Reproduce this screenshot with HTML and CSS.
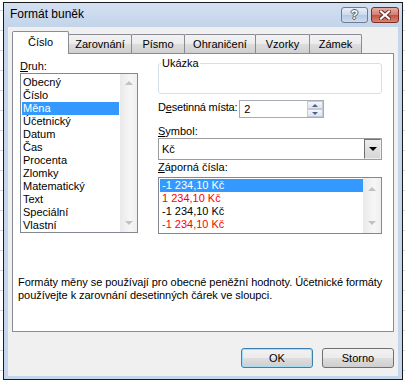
FILE: index.html
```html
<!DOCTYPE html>
<html lang="cs">
<head>
    <meta charset="UTF-8">
    <meta name="viewport" content="width=device-width, initial-scale=1.0">
    <title>Formát buněk</title>
    <link rel="stylesheet" href="styles.css">
</head>
<body>
    <div class="window">
        <div class="titlebar">
            <span class="title">Formát buněk</span>
            <div class="caption-buttons">
                <span class="cap-btn help">?</span>
                <span class="cap-btn close">
                    <svg width="12" height="10" viewBox="0 0 12 10">
                        <path d="M2 1.5 L10 8.5 M10 1.5 L2 8.5" stroke="#6b251c" stroke-width="4" stroke-linecap="square"/>
                        <path d="M2 1.5 L10 8.5 M10 1.5 L2 8.5" stroke="#fff" stroke-width="2.2" stroke-linecap="square"/>
                    </svg>
                </span>
            </div>
        </div>

        <div class="client">
            <div class="tabs">
                <div class="tab active t1">Číslo</div>
                <div class="tab t2">Zarovnání</div>
                <div class="tab t3">Písmo</div>
                <div class="tab t4">Ohraničení</div>
                <div class="tab t5">Vzorky</div>
                <div class="tab t6">Zámek</div>
            </div>

            <div class="panel">
                <div class="cols">
                    <div class="left">
                        <div class="label"><u>D</u>ruh:</div>
                        <div class="listbox">
                            <div class="items">
                                <div class="row">Obecný</div>
                                <div class="row">Číslo</div>
                                <div class="row selected">Měna</div>
                                <div class="row">Účetnický</div>
                                <div class="row">Datum</div>
                                <div class="row">Čas</div>
                                <div class="row">Procenta</div>
                                <div class="row">Zlomky</div>
                                <div class="row">Matematický</div>
                                <div class="row">Text</div>
                                <div class="row">Speciální</div>
                                <div class="row">Vlastní</div>
                            </div>
                            <div class="scrollbar">
                                <span class="arrow up"></span>
                                <span class="arrow down"></span>
                            </div>
                        </div>
                    </div>

                    <div class="right">
                        <div class="group">
                            <span class="legend">Ukázka</span>
                        </div>

                        <div class="spin-row">
                            <div class="spin-label">D<u>e</u>setinná místa:</div>
                            <div class="spinbox">
                                <span class="value">2</span>
                                <div class="spin-btns">
                                    <span class="spin-btn"><span class="tri-up"></span></span>
                                    <span class="spin-btn"><span class="tri-down"></span></span>
                                </div>
                            </div>
                        </div>

                        <div class="label symbol-label"><u>S</u>ymbol:</div>
                        <div class="select">
                            <span class="value">Kč</span>
                            <span class="drop-btn"><span class="tri-black"></span></span>
                        </div>

                        <div class="label neg-label"><u>Z</u>áporná čísla:</div>
                        <div class="listbox neg-list">
                            <div class="items">
                                <div class="row selected">-1 234,10 Kč</div>
                                <div class="row red">1 234,10 Kč</div>
                                <div class="row">-1 234,10 Kč</div>
                                <div class="row red">-1 234,10 Kč</div>
                            </div>
                            <div class="scrollbar">
                                <span class="arrow up"></span>
                                <span class="arrow down"></span>
                            </div>
                        </div>
                    </div>
                </div>

                <p class="desc">Formáty měny se používají pro obecné peněžní hodnoty. Účetnické formáty<br>používejte k zarovnání desetinných čárek ve sloupci.</p>
            </div>

            <div class="buttons">
                <button class="btn default">OK</button>
                <button class="btn">Storno</button>
            </div>
        </div>
    </div>
</body>
</html>
```

FILE: styles.css
```css
body {
    margin: 0;
    height: 381px;
    overflow: hidden;
    font-family: "Liberation Sans", Arial, sans-serif;
    font-size: 11px;
    line-height: 13px;
    color: #000;
    background: repeating-linear-gradient(#fff 0 10px, #d0d7e5 10px 11px, #fff 11px 20px);
}

/* window frame */
.window {
    margin: 2px 0 0 3px;
    width: 400px;
    height: 378px;
    box-sizing: border-box;
    border: 1px solid #1b1b1b;
    background: #c5d6ec;
    display: flex;
    flex-direction: column;
}
.titlebar {
    height: 24px;
    display: flex;
    align-items: flex-start;
    background: linear-gradient(#d3e0f1, #c3d4ea);
}
.title {
    font-size: 12px;
    line-height: 15px;
    padding: 4px 0 0 6px;
}
.caption-buttons {
    margin: 4px 3px 0 auto;
    display: flex;
    gap: 3px;
}
.cap-btn {
    width: 27px;
    height: 16px;
    box-sizing: border-box;
    border: 1px solid #6c7c92;
    border-radius: 3px;
    display: flex;
    align-items: center;
    justify-content: center;
}
.help {
    background: linear-gradient(#e6eef8, #cbdaee 50%, #b5c9e3 51%, #cddcf0);
    color: #fff;
    font-weight: bold;
    font-size: 12px;
    text-shadow: 1px 0 0 #4f5b6b, -1px 0 0 #4f5b6b, 0 1px 0 #4f5b6b, 0 -1px 0 #4f5b6b;
}
.close {
    width: 28px;
    border-color: #7a2e24;
    background: linear-gradient(#e8aea4, #d47c6f 50%, #c4503f 51%, #d68676);
}

.client {
    flex: 1;
    margin: 0 4px 3px 4px;
    background: #f0f0f0;
}

/* tabs */
.tabs {
    display: flex;
    align-items: flex-end;
    height: 22px;
    margin: 4px 0 0 4px;
}
.tab {
    height: 19px;
    box-sizing: border-box;
    border: 1px solid #898c95;
    border-bottom: 0;
    margin-left: -1px;
    padding-top: 1px;
    border-radius: 2px 2px 0 0;
    background: linear-gradient(#f3f3f3, #ebebeb 50%, #dddddd 51%, #cfcfcf);
    display: flex;
    align-items: center;
    justify-content: center;
}
.tab.active {
    height: 23px;
    margin-bottom: -1px;
    padding-top: 0;
    padding-bottom: 2px;
    background: #fff;
    position: relative;
    z-index: 1;
}
.t1 { width: 57px; margin-left: 0; }
.t2 { width: 64px; }
.t3 { width: 54px; }
.t4 { width: 72px; }
.t5 { width: 55px; }
.t6 { width: 53px; }

.panel {
    margin: 0 4px;
    height: 279px;
    box-sizing: border-box;
    border: 1px solid #898c95;
    background: #fff;
    padding: 6px 0 0 5px;
}
.cols {
    display: flex;
}
.left {
    margin-left: 2px;
    width: 118px;
}
.right {
    margin-left: 20px;
    width: 224px;
}

/* list boxes */
.listbox {
    height: 160px;
    box-sizing: border-box;
    border: 1px solid #828790;
    display: flex;
}
.items {
    flex: 1;
    padding: 2px 1px 0 1px;
}
.row {
    height: 13px;
    padding-left: 1px;
    white-space: nowrap;
}
.row.selected {
    background: #3399ff;
    color: #fff;
}
.row.red {
    color: #f00;
}
.scrollbar {
    width: 17px;
    background: linear-gradient(to right, #e9e9e9, #f6f6f6 60%, #efefef);
    display: flex;
    flex-direction: column;
    justify-content: space-between;
    align-items: center;
    padding: 7px 0;
    box-sizing: border-box;
}
.arrow {
    width: 0;
    height: 0;
    border-left: 4px solid transparent;
    border-right: 4px solid transparent;
}
.arrow.up {
    border-bottom: 4px solid #c2c2c2;
}
.arrow.down {
    border-top: 4px solid #c2c2c2;
}

/* right column */
.group {
    margin-top: 3px;
    height: 31px;
    box-sizing: border-box;
    border: 1px solid #d5dfe5;
    border-radius: 3px;
}
.legend {
    display: block;
    width: fit-content;
    margin: -7px 0 0 2px;
    padding: 0 1px;
    background: #fff;
}
.spin-row {
    margin-top: 6px;
    display: flex;
    align-items: flex-start;
}
.spin-label {
    white-space: nowrap;
    padding: 1px 2px 0 0;
    letter-spacing: -0.2px;
}
.spinbox {
    width: 85px;
    height: 18px;
    box-sizing: border-box;
    border: 1px solid #a5acb5;
    display: flex;
}
.spinbox .value {
    flex: 1;
    padding: 2px 0 0 4px;
}
.spin-btns {
    width: 16px;
    display: flex;
    flex-direction: column;
}
.spin-btn {
    height: 8px;
    box-sizing: border-box;
    border: 1px solid #c3cbd6;
    background: linear-gradient(#f4f6f9, #dfe5ed);
    display: flex;
    align-items: center;
    justify-content: center;
}
.tri-up, .tri-down {
    width: 0;
    height: 0;
    border-left: 3px solid transparent;
    border-right: 3px solid transparent;
}
.tri-up { border-bottom: 3px solid #4d6190; }
.tri-down { border-top: 3px solid #4d6190; }

.symbol-label {
    margin-top: 7px;
}
.select {
    height: 22px;
    box-sizing: border-box;
    border: 1px solid #9c9c9c;
    display: flex;
    align-items: center;
}
.select .value {
    flex: 1;
    padding-left: 3px;
}
.drop-btn {
    width: 17px;
    height: 20px;
    box-sizing: border-box;
    border: 1px solid #707070;
    border-right-color: #f0f0f0;
    border-bottom-color: #f0f0f0;
    background: linear-gradient(#ececec, #d6d6d6);
    display: flex;
    align-items: center;
    justify-content: center;
}
.tri-black {
    width: 0;
    height: 0;
    border-left: 4px solid transparent;
    border-right: 4px solid transparent;
    border-top: 4px solid #000;
}
.neg-label {
    margin-top: 1px;
}
.neg-list {
    margin-top: 3px;
    height: 57px;
}
.neg-list .items {
    padding: 1px 0 0 1px;
}
.neg-list .row {
    padding-left: 2px;
}
.neg-list .scrollbar {
    width: 18px;
    padding: 9px 0 8px;
}

.desc {
    margin: 42px 0 0 0;
    letter-spacing: -0.05px;
}

/* bottom buttons */
.buttons {
    margin-top: 16px;
    padding-right: 4px;
    display: flex;
    justify-content: flex-end;
    gap: 9px;
}
.btn {
    width: 72px;
    height: 20px;
    border: 1px solid #707070;
    border-radius: 3px;
    background: linear-gradient(#f2f2f2, #ebebeb 50%, #dddddd 51%, #cfcfcf);
    font-family: inherit;
    font-size: 11px;
    color: #000;
    padding: 0;
}
.btn.default {
    border-color: #3c7fb1;
    box-shadow: inset 0 0 0 1px #a6dcf5;
}
```
